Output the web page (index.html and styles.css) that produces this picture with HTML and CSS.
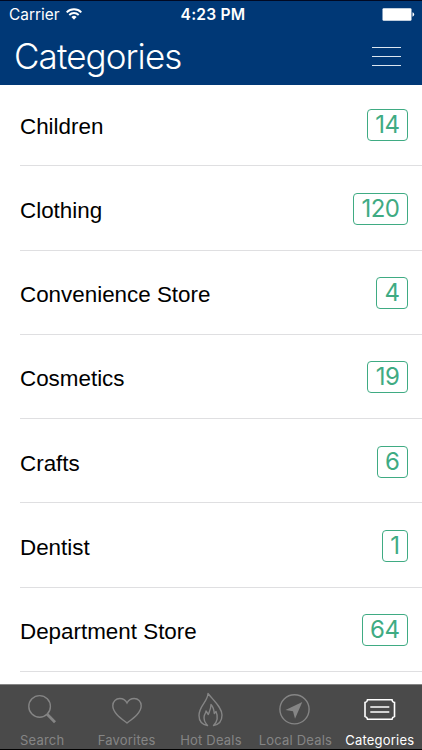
FILE: index.html
```html
<!DOCTYPE html>
<html lang="en">
<head>
    <meta charset="UTF-8">
    <title>Categories</title>
    <link rel="stylesheet" href="styles.css">
</head>
<body>
    <header>
        <div class="status-bar">
            <div class="carrier">
                <span>Carrier</span>
                <svg width="16" height="12" viewBox="0 0 16 12" fill="none" stroke="#fff" stroke-width="1.9">
                    <path d="M0.7 4.3a10.3 10.3 0 0 1 14.6 0M3.3 7a6.6 6.6 0 0 1 9.4 0"/>
                    <path d="M8 11.8L5.4 9.1a3.7 3.7 0 0 1 5.2 0z" fill="#fff" stroke="none"/>
                </svg>
            </div>
            <div class="time">4:23 PM</div>
            <svg class="battery" width="33" height="13" viewBox="0 0 33 13" fill="#fff">
                <rect x="0.5" y="0.3" width="29" height="12.4" rx="1.2"/>
                <path d="M30.5 4.3q1.7 0.6 1.7 2.2t-1.7 2.2z"/>
            </svg>
        </div>
        <div class="title-bar">
            <h1>Categories</h1>
            <div class="menu"><i></i><i></i><i></i></div>
        </div>
    </header>

    <main>
        <ul class="list">
            <li><span class="name">Children</span><span class="count">14</span></li>
            <li><span class="name">Clothing</span><span class="count">120</span></li>
            <li><span class="name">Convenience Store</span><span class="count">4</span></li>
            <li><span class="name">Cosmetics</span><span class="count">19</span></li>
            <li><span class="name">Crafts</span><span class="count">6</span></li>
            <li><span class="name">Dentist</span><span class="count">1</span></li>
            <li><span class="name">Department Store</span><span class="count">64</span></li>
        </ul>
    </main>

    <nav class="tabs">
        <a class="tab">
            <svg width="34" height="36" viewBox="0 0 34 36">
                <circle cx="14.6" cy="14.4" r="10.8"/>
                <path d="M22.2 22.2l7.8 8" stroke-width="2.8"/>
            </svg>
            <span>Search</span>
        </a>
        <a class="tab">
            <svg width="34" height="36" viewBox="0 0 34 36">
                <path d="M17 31C11.500 26.800 2.800 21 2.800 13.800C2.800 9.500 6 6.500 9.800 6.500C13 6.500 15.500 8 17 11C18.500 8 21 6.500 24.200 6.500C28 6.500 31.200 9.500 31.200 13.800C31.200 21 22.500 26.800 17 31z"/>
            </svg>
            <span>Favorites</span>
        </a>
        <a class="tab">
            <svg width="34" height="36" viewBox="0 0 34 36">
                <path d="M14 1.500C13.500 10 5 14 5 23.500C5 28.500 8 32.500 13.500 33.500C10.500 30 9.500 27 10.200 24C10.700 22 11.800 21 12 19L14.300 22.500C15.500 19 17 17 17 12.500C19.500 15 20 18 20.300 21.500L22 19.500C24 24 24 29 19.500 33.500C25 32.500 28 28.500 28 23C28 15.500 20 9 14 1.500z" stroke-linejoin="round"/>
            </svg>
            <span>Hot Deals</span>
        </a>
        <a class="tab">
            <svg width="34" height="36" viewBox="0 0 34 36">
                <circle cx="16.5" cy="17.3" r="14.6"/>
                <path d="M24.300 10L7.500 18L15 19.200L17 26.700z" fill="currentColor" stroke="none"/>
            </svg>
            <span>Local Deals</span>
        </a>
        <a class="tab active">
            <svg width="34" height="36" viewBox="0 0 34 36">
                <path d="M4.500 7.700H29Q29.200 10 31.500 10.500V24.400Q29.200 25 29 27.300H4.500Q4.300 25 2 24.400V10.500Q4.300 10 4.500 7.700z" stroke-width="1.600"/>
                <path d="M7.300 15H26.300M7.300 20H26.300"/>
            </svg>
            <span>Categories</span>
        </a>
    </nav>
</body>
</html>
```
FILE: styles.css
```css
* {
    box-sizing: border-box;
}

body {
    margin: 0;
    height: 750px;
    display: flex;
    flex-direction: column;
    overflow: hidden;
    background: #fff;
    font-family: Inter, "Liberation Sans", sans-serif;
}

header {
    height: 85px;
    flex: none;
    background: #003876;
    border-top: 1px solid #000923;
    color: #fff;
}

.status-bar {
    height: 27px;
    padding: 0 7px 0 9px;
    display: grid;
    grid-template-columns: 1fr auto 1fr;
    align-items: center;
    font-size: 15.4px;
}

.carrier {
    display: flex;
    align-items: center;
    gap: 7px;
}

.carrier svg {
    margin-top: -1px;
}

.time {
    padding-left: 2px;
    font-size: 15.6px;
    font-weight: 600;
    letter-spacing: 0.2px;
}

.battery {
    justify-self: end;
}

.title-bar {
    height: 56px;
    padding: 0 21px 0 14px;
    display: flex;
    justify-content: space-between;
    align-items: center;
}

h1 {
    margin: 0;
    font-size: 35px;
    font-weight: 300;
    line-height: 56px;
    letter-spacing: -0.9px;
}

.menu {
    width: 29px;
    display: flex;
    flex-direction: column;
    gap: 8px;
}

.menu i {
    height: 1px;
    background: #dce6f0;
}

main {
    flex: 1;
    min-height: 0;
    overflow: hidden;
}

.list {
    list-style: none;
    margin: -3px 0 0;
    padding: 0 0 0 20px;
}

.list li {
    height: 84.25px;
    padding: 2px 14px 0 0;
    display: flex;
    justify-content: space-between;
    align-items: center;
    border-bottom: 1px solid #dfdfe1;
}

.name {
    padding-top: 4px;
    font-family: "Liberation Sans", sans-serif;
    font-size: 22.4px;
    color: #000;
}

.count {
    height: 32px;
    padding: 0 7.5px;
    border: 1.5px solid #3fab83;
    border-radius: 4px;
    font-size: 24px;
    line-height: 30px;
    letter-spacing: -0.5px;
    color: #3fab83;
}

.tabs {
    height: 66px;
    flex: none;
    display: grid;
    grid-template-columns: repeat(5, 1fr);
    background: #4a4a4a;
    border-top: 1px solid #858585;
    border-bottom: 1px solid #000;
}

.tab {
    padding-top: 7px;
    display: flex;
    flex-direction: column;
    align-items: center;
    color: #858585;
    font-size: 13px;
    white-space: nowrap;
}

.tab svg {
    flex: none;
    fill: none;
    stroke: currentColor;
    stroke-width: 1.4;
}

.tab span {
    margin-top: 4px;
    line-height: 16px;
    letter-spacing: 0.2px;
}

.tab.active {
    color: #fff;
}
```
